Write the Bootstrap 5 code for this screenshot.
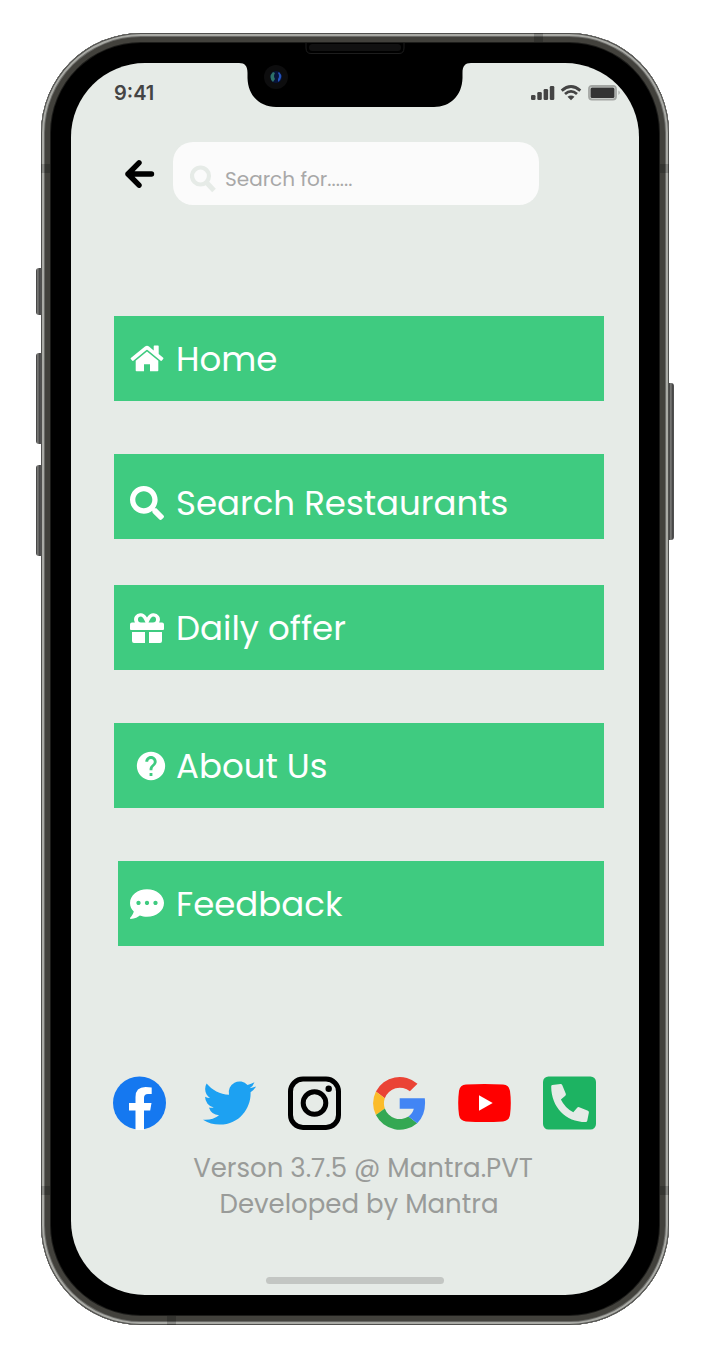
<!DOCTYPE html>
<html lang="en">
<head>
<meta charset="utf-8">
<meta name="viewport" content="width=device-width, initial-scale=1">
<title>Mantra menu</title>
<link href="https://cdn.jsdelivr.net/npm/bootstrap@5.3.0/dist/css/bootstrap.min.css" rel="stylesheet">
<style>
  body { background: #fff; font-family: Poppins, "Inter", sans-serif; }
  svg { display: block; flex: none; }

  /* Phone shell: metal rim drawn as nested rings, then the black bezel */
  .phone {
    margin: 33px 42px 43px 41px; padding: 30px; border-radius: 100px; background: #000;
    box-shadow: inset 0 0 0 1px #50504e, inset 0 0 0 3px #a9aaa5, inset 0 0 0 4px #6a6a67, inset 0 0 0 9px #42413c, inset 0 0 0 10px #1c1c1a;
  }
  .screen { background: #e6ebe7; border-radius: 74px; }
  .side-key { position: absolute; width: 5px; background: linear-gradient(90deg, #333, #8a8a87 40%, #444 60%, #555); }
  .side-key.left { left: -5px; border-radius: 3px 0 0 3px; }
  .side-key.right { right: -5px; border-radius: 0 3px 3px 0; }
  .key-mute { top: 235px; height: 47px; }
  .key-up { top: 320px; height: 91px; }
  .key-down { top: 432px; height: 91px; }
  .key-power { top: 350px; height: 157px; }
  .band { position: absolute; width: 9px; height: 9px; background: #0003; }
  .band.upper { top: 131px; }
  .band.lower { bottom: 130px; }
  .band.top-edge { right: 126px; top: 0; }
  .band.bottom-edge { left: 126px; bottom: 0; }
  .notch { position: absolute; top: 8px; left: 50%; margin-left: -120px; }

  .status { padding: 18px 18px 0 43px; height: 79px; color: #444; }
  .clock { font: 600 20px/24px "Inter", sans-serif; }

  .search-row { padding: 0 100px 0 53px; gap: 18px; }
  .back { border: 0; background: none; padding: 0; color: #000; }
  .search-field { min-width: 0; height: 63px; border-radius: 20px; background: #fbfbfb; padding: 10px 16px 0 17px; gap: 8px; }
  .search-field input { border: 0; background: none; outline: 0; padding: 0; min-width: 0; width: 100%; font-size: 20px; line-height: 28px; color: #777; }
  .search-field input::placeholder { color: #a8a8a8; opacity: 1; }

  .menu { padding: 111px 35px 0 43px; }
  .menu a { height: 85px; margin-bottom: 53px; padding-left: 16px; gap: 12px; background: #3fcb80; color: #fff; font-size: 34px; line-height: 48px; text-decoration: none; }
  .menu a.lowered { padding-top: 12px; margin-bottom: 46px; }
  .menu a.indented { margin-left: 4px; padding-left: 12px; }
  .menu svg { width: 34px; height: 34px; fill: #fff; }
  .menu svg.inset { margin: 0 -4px 0 4px; }

  .social { padding: 77px 35px 0 42px; gap: 32px; }
  .social svg { width: 53px; height: 54px; }
  .social .spaced { margin-left: 5px; }
  .credits { padding: 20px 35px 0 43px; font-size: 26px; line-height: 36px; color: #999b99; }
  .home-bar { width: 178px; height: 7px; border-radius: 4px; background: #c3c6c3; margin-top: 55px; }
  .screen-end { padding-bottom: 11px; }
</style>
</head>
<body>
<div class="phone position-relative">
  <i class="side-key left key-mute"></i><i class="side-key left key-up"></i><i class="side-key left key-down"></i>
  <i class="side-key right key-power"></i>
  <i class="band upper start-0"></i><i class="band upper end-0"></i>
  <i class="band lower start-0"></i><i class="band lower end-0"></i>
  <i class="band top-edge"></i><i class="band bottom-edge"></i>

  <svg class="notch" width="240" height="68" viewBox="0 0 240 68" aria-hidden="true">
    <path d="M4 22C10 22 12.500 25 12.500 32V37C13 55 25 66 41 66H199C215 66 227 55 227.500 37V32C227.500 25 230 22 236 22Z" fill="#000"/>
    <path d="M71 2V7Q71 12.500 76 12.500H164Q169 12.500 169 7V2" fill="none" stroke="#1d1d1d"/>
    <rect x="74" y="3" width="92" height="7" rx="3.500" fill="#111"/>
    <circle cx="41" cy="36" r="12" fill="#0d0d0e"/>
    <circle cx="41" cy="36" r="6" fill="#07133a"/>
    <path d="M38 31Q33 36 38 41L40 38Q38 35 40 32Z" fill="#2e7168"/>
    <path d="M44 31Q49 36 43 41L43 38Q45 35 43 32Z" fill="#2452b8"/>
  </svg>

  <main class="screen screen-end d-flex flex-column">
    <div class="status d-flex justify-content-between align-items-start">
      <span class="clock">9:41</span>
      <svg width="90" height="24" viewBox="0 0 90 24" aria-hidden="true">
        <g fill="#444"><rect x="0" y="14" width="4.500" height="5" rx="1.300"/><rect x="6.300" y="11" width="4.500" height="8" rx="1.300"/><rect x="12.600" y="8" width="4.500" height="11" rx="1.300"/><rect x="18.800" y="5" width="4.500" height="14" rx="1.300"/>
        <path d="M36.500 15.800Q40 13.300 43.500 15.800L40 19.300Z"/></g>
        <g fill="none" stroke="#444" stroke-width="2.800"><path d="M30.700 9.600Q40 1.500 49.300 9.600"/><path d="M34 13Q40 7.800 46 13"/></g>
        <rect x="58" y="5" width="27" height="13.500" rx="3" fill="none" stroke="#a3a6a3" stroke-width="1.800"/>
        <rect x="59.500" y="6.600" width="24" height="10.300" rx="1.500" fill="#333"/>
        <path d="M87.500 9.500Q90 11.700 87.500 14Z" fill="#a3a6a3"/>
      </svg>
    </div>

    <form class="search-row d-flex align-items-center" role="search">
      <button type="button" class="back" aria-label="Back">
        <svg width="31" height="30" viewBox="0 0 31 30" fill="none" stroke="#000" stroke-width="5.400" stroke-linecap="round" stroke-linejoin="round"><path d="M27.500 15H4M15 3.800L4 15L15 26.200"/></svg>
      </button>
      <label class="search-field d-flex align-items-center flex-grow-1">
        <svg width="27" height="28" viewBox="0 0 27 28" fill="none" stroke="#e6ebe7"><circle cx="10.500" cy="11" r="8.500" stroke-width="4.200"/><path d="M17 18L24 25.500" stroke-width="5"/></svg>
        <input type="text" placeholder="Search for......" aria-label="Search">
      </label>
    </form>

    <nav class="menu">
      <a href="#" class="d-flex align-items-center">
        <svg viewBox="0 0 34 34"><path d="M17 9.500L28.300 18.800V28.500Q28.300 29.300 27.500 29.300H20V22.300H14V29.300H6.500Q5.700 29.300 5.700 28.500V18.800Z"/><path d="M.8 16L15 4.500Q17 2.900 19 4.500L23.700 8.400V4.200Q23.700 3.500 24.400 3.500H28Q28.700 3.500 28.700 4.200V12L33.200 15.800Q33.700 16.300 33.200 16.900L31.900 18.600Q31.300 19.100 30.700 18.700L17.600 8Q17 7.500 16.400 8L3.300 18.700Q2.700 19.100 2.100 18.600L.8 17Q.4 16.500 .8 16Z"/></svg>
        Home
      </a>
      <a href="#" class="lowered d-flex align-items-center">
        <svg viewBox="0 0 512 512"><path d="M505 442.700L405.300 343c-4.500-4.500-10.600-7-17-7H372c27.600-35.300 44-79.700 44-128C416 93.100 322.900 0 208 0S0 93.100 0 208s93.100 208 208 208c48.300 0 92.700-16.400 128-44v16.300c0 6.400 2.500 12.500 7 17l99.700 99.700c9.400 9.400 24.600 9.400 33.900 0l28.300-28.300c9.400-9.400 9.400-24.600.1-34zM208 336c-70.700 0-128-57.200-128-128 0-70.700 57.200-128 128-128 70.700 0 128 57.200 128 128 0 70.700-57.200 128-128 128z"/></svg>
        Search Restaurants
      </a>
      <a href="#" class="d-flex align-items-center">
        <svg viewBox="0 0 34 34"><path d="M2 11.500H4.900A6.200 6.200 0 0 1 11 2.300Q14 2.300 17 6.500Q20 2.300 23 2.300A6.200 6.200 0 0 1 29.100 11.500H32Q34 11.500 34 13.500V18Q34 19 33 19H1Q0 19 0 18V13.500Q0 11.500 2 11.500ZM11 5.400A3 3 0 0 0 11 11.500H15.500Q13 5.400 11 5.400ZM23 5.400Q21 5.400 18.500 11.500H23A3 3 0 0 0 23 5.400Z" fill-rule="evenodd"/><path d="M2 21H15V32H4Q2 32 2 30ZM19 21H32V30Q32 32 30 32H19Z"/></svg>
        Daily offer
      </a>
      <a href="#" class="d-flex align-items-center">
        <svg class="inset" viewBox="0 0 24 24"><path d="M12 2C6.480 2 2 6.480 2 12s4.480 10 10 10 10-4.480 10-10S17.520 2 12 2zm1 17h-2v-2h2v2zm2.070-7.750l-.9.920C13.450 12.900 13 13.500 13 15h-2v-.5c0-1.100.45-2.100 1.170-2.830l1.240-1.260c.37-.36.59-.86.59-1.410 0-1.100-.9-2-2-2s-2 .9-2 2H8c0-2.210 1.790-4 4-4s4 1.790 4 4c0 .88-.36 1.680-.93 2.250z"/></svg>
        About Us
      </a>
      <a href="#" class="indented d-flex align-items-center">
        <svg viewBox="0 0 512 512"><path d="M256 32C114.600 32 0 125.100 0 240c0 49.600 21.400 95 57 130.700C44.500 421.100 2.700 466 2.200 466.500c-2.200 2.300-2.800 5.700-1.500 8.700S4.800 480 8 480c66.300 0 116-31.800 140.600-51.400 32.700 12.300 69 19.400 107.400 19.400 141.400 0 256-93.100 256-208S397.400 32 256 32zM128 272c-17.700 0-32-14.300-32-32s14.300-32 32-32 32 14.300 32 32-14.300 32-32 32zm128 0c-17.700 0-32-14.300-32-32s14.300-32 32-32 32 14.300 32 32-14.300 32-32 32zm128 0c-17.700 0-32-14.300-32-32s14.300-32 32-32 32 14.300 32 32-14.300 32-32 32z"/></svg>
        Feedback
      </a>
    </nav>

    <div class="social d-flex">
      <a href="#" aria-label="Facebook"><svg viewBox="0 0 53 54"><circle cx="26.500" cy="27" r="26.500" fill="#1578f0"/><path d="M22.500 54V34.500H16V27H22.500V21Q22.500 11 32.500 11Q36 11 38.700 11.500V18H35Q31 18 31 22V27H38.500L37.200 34.500H31V54Q26.500 54 22.500 54Z" fill="#fff"/></svg></a>
      <a href="#" aria-label="Twitter" class="spaced"><svg viewBox="0 0 24 24"><path fill="#1da1f2" d="M23.953 4.570a10 10 0 0 1-2.825.775 4.958 4.958 0 0 0 2.163-2.723c-.951.555-2.005.959-3.127 1.184a4.920 4.920 0 0 0-8.384 4.482C7.690 8.095 4.067 6.130 1.640 3.162a4.822 4.822 0 0 0-.666 2.475c0 1.710.87 3.213 2.188 4.096a4.904 4.904 0 0 1-2.228-.616v.06a4.923 4.923 0 0 0 3.946 4.827 4.996 4.996 0 0 1-2.212.085 4.936 4.936 0 0 0 4.604 3.417 9.867 9.867 0 0 1-6.102 2.105c-.39 0-.779-.023-1.170-.067a13.995 13.995 0 0 0 7.557 2.209c9.053 0 13.998-7.496 13.998-13.985 0-.21 0-.42-.015-.63A9.935 9.935 0 0 0 24 4.590z"/></svg></a>
      <a href="#" aria-label="Instagram"><svg viewBox="0 0 53 54" fill="none" stroke="#000"><rect x="2.500" y="3" width="48" height="48.500" rx="12.500" stroke-width="5"/><circle cx="26.500" cy="27" r="11.300" stroke-width="5"/><circle cx="40.700" cy="12.800" r="3.200" fill="#000" stroke="none"/></svg></a>
      <a href="#" aria-label="Google"><svg viewBox="0 0 53 54"><path fill="#ea4335" d="M2.900 15.500A26.700 26.700 0 0 1 44.500 7.800L36.900 15.300A16 16 0 0 0 11.800 22.200Z"/><path fill="#fbbc2a" d="M2.900 15.500L11.800 22.200A16 16 0 0 0 11.800 32.500L2.900 39A27 27 0 0 1 2.900 15.500Z"/><path fill="#34a853" d="M2.900 39L11.800 32.500A16 16 0 0 0 35.500 40.500L44.200 47.200A26.700 26.700 0 0 1 2.900 39Z"/><path fill="#4285f4" d="M26.700 22.200H51.800Q53.500 38.500 44.200 47.200L35.500 40.500Q39.700 37.500 40.800 32.800H26.700Z"/></svg></a>
      <a href="#" aria-label="YouTube"><svg viewBox="0 0 53 54"><path fill="#f00" d="M8 8.600Q26.500 7.200 45 8.600Q51 9 52 15Q53.600 27 52 39Q51 45 45 45.400Q26.500 46.800 8 45.400Q2 45 1 39Q-.6 27 1 15Q2 9 8 8.600Z"/><path fill="#fff" d="M21 19.200L34.700 27L21 34.800Z"/></svg></a>
      <a href="#" aria-label="Phone"><svg viewBox="0 0 53 54"><rect y=".5" width="53" height="53" rx="5.500" fill="#1db362"/><path fill="#e6ebe7" d="M8.200 10.700Q8 9.500 9.300 9.100L17.500 8Q18.700 7.900 19.200 9L22.800 17.800Q23.200 18.800 22.300 19.700L17.900 23.500Q22 32 30.300 36.300L34.400 31.600Q35.100 30.800 36.200 31.200L45 34.800Q46 35.300 45.900 36.400L44.200 45Q43.900 46 42.800 46C22.500 46 8.400 31 8.200 10.700Z"/></svg></a>
    </div>

    <footer class="credits text-center">
      <div class="ps-2">Verson 3.7.5 @ Mantra.PVT</div>
      <div>Developed by Mantra</div>
    </footer>
    <div class="home-bar align-self-center"></div>
  </main>
</div>
<script src="https://cdn.jsdelivr.net/npm/bootstrap@5.3.0/dist/js/bootstrap.bundle.min.js"></script>
</body>
</html>
